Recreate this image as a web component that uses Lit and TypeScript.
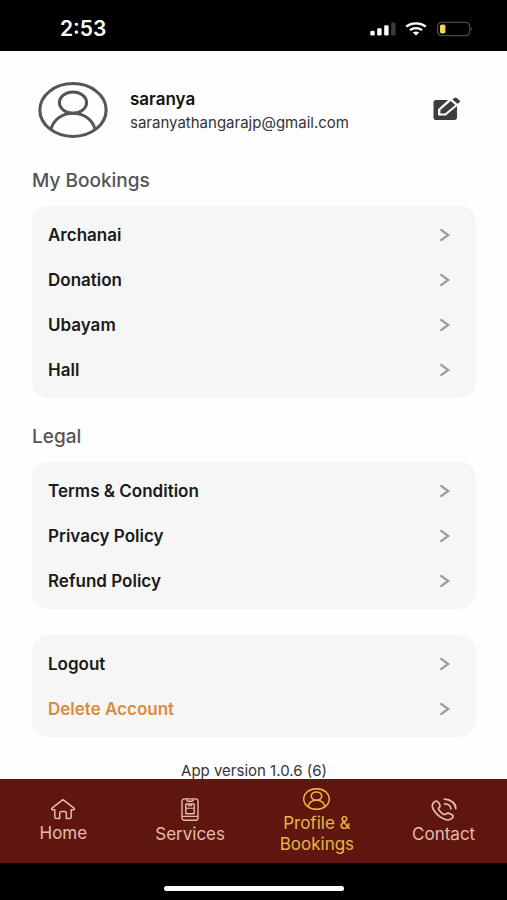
import { LitElement, html, svg, css, nothing } from "lit";
import { customElement, property } from "lit/decorators.js";
import { classMap } from "lit/directives/class-map.js";

interface MenuEntry {
  label: string;
  accent?: boolean;
}

const bookings: MenuEntry[] = [
  { label: "Archanai" },
  { label: "Donation" },
  { label: "Ubayam" },
  { label: "Hall" },
];

const legal: MenuEntry[] = [
  { label: "Terms & Condition" },
  { label: "Privacy Policy" },
  { label: "Refund Policy" },
];

const account: MenuEntry[] = [
  { label: "Logout" },
  { label: "Delete Account", accent: true },
];

const personShape = svg`
  <ellipse cx="34" cy="28" rx="32.2" ry="26.4"></ellipse>
  <ellipse cx="34" cy="20.6" rx="13.2" ry="10.6"></ellipse>
  <path d="M12.5 47.5C15 37.5 23.5 31.2 34 31.2S53 37.5 55.5 47.5"></path>`;

const homeIcon = html`<svg width="26" height="22" viewBox="0 0 26 22" fill="none" stroke="currentColor" stroke-width="1.5" stroke-linejoin="round" aria-hidden="true">
  <path d="M13 1.6 2 10.2Q1 11.4 2.6 11.8H4.8V19Q4.8 20.6 6.4 20.6H9.7V15.2Q9.7 13.6 11.3 13.6H14.7Q16.3 13.6 16.3 15.2V20.6H19.6Q21.2 20.6 21.2 19V11.8H23.4Q25 11.4 24 10.2Z"></path>
</svg>`;

const servicesIcon = html`<svg width="18" height="23" viewBox="0 0 18 23" fill="none" stroke="currentColor" stroke-width="1.4" stroke-linejoin="round" aria-hidden="true">
  <rect x="1" y="0.9" width="16" height="21.3" rx="2.2"></rect>
  <path d="M5.6 1V1.8Q5.6 3.2 7 3.2H11Q12.4 3.2 12.4 1.8V1M1.2 18.4H16.8"></path>
  <rect x="4.8" y="6" width="8.4" height="9.8" rx="0.6"></rect>
  <path d="M4.8 10.2H13.2M7.6 6V7.8H10.4V6" stroke-width="1.1"></path>
</svg>`;

const profileIcon = html`<svg width="27" height="22" viewBox="0 0 68 56" preserveAspectRatio="none" fill="none" stroke="currentColor" stroke-width="4" aria-hidden="true">${personShape}</svg>`;

const contactIcon = html`<svg width="26" height="23" viewBox="0 0 26 23" fill="none" stroke="currentColor" stroke-width="1.7" stroke-linecap="round" stroke-linejoin="round" aria-hidden="true">
  <path d="M7.9 9.9C9 9 9.4 8 8.8 6.8L7.4 4.4C6.6 3.1 5.1 2.8 3.7 3.7C1.2 5.2.6 8.4 2.3 11.2C4.8 15.5 8.7 19.3 13.8 21.3C16.8 22.5 20.2 21.8 21.7 19.6C22.4 18.5 22.1 17.5 21 16.8L18.4 15.4C17 14.8 16 15 15.1 15.8C14.2 16.6 13.2 16.7 12.1 16C10.5 15 9.1 13.6 8 12.1C7.3 11.2 7.2 10.5 7.9 9.9Z"></path>
  <path d="M13.5 1.2C19.8 1.2 24.8 5.5 24.8 10.6M13.5 5.8C17.2 5.8 19.8 8 19.8 10.8"></path>
</svg>`;

@customElement("menu-card")
class MenuCard extends LitElement {
  @property({ attribute: false }) entries: MenuEntry[] = [];

  static styles = css`
    :host {
      display: block;
      background: #f6f6f6;
      border-radius: 16px;
      padding: 6px 0;
    }
    .list {
      list-style: none;
      margin: 0;
      padding: 0;
    }
    .row {
      display: flex;
      align-items: center;
      justify-content: space-between;
      width: 100%;
      height: 45px;
      padding: 0 25px 0 16px;
      border: 0;
      background: none;
      color: #1a1a1a;
      font: 600 17px/20px Inter, Roboto, sans-serif;
      text-align: left;
      box-sizing: border-box;
      cursor: pointer;
    }
    .accent {
      color: #dd8a3c;
    }
    .chevron {
      flex: none;
      color: #9b9b9b;
    }
  `;

  render() {
    return html`<ul class="list">
      ${this.entries.map(
        (e) => html`<li>
          <button type="button" class=${classMap({ row: true, accent: !!e.accent })}>
            <span>${e.label}</span>
            <svg class="chevron" width="14" height="14" viewBox="0 0 14 14" fill="none" stroke="currentColor" stroke-width="2.2" aria-hidden="true">
              <path d="M3.4 1.4 11.2 7 3.4 12.6"></path>
            </svg>
          </button>
        </li>`
      )}
    </ul>`;
  }
}

@customElement("app-root")
class AppRoot extends LitElement {
  static styles = css`
    :host {
      display: flex;
      flex-direction: column;
      height: 100vh;
      background: #fefefe;
      font-family: Inter, Roboto, sans-serif;
      color: #1a1a1a;
    }
    .status {
      flex: none;
      display: flex;
      align-items: center;
      justify-content: space-between;
      height: 51px;
      padding: 6px 34px 0 60px;
      box-sizing: border-box;
      background: #000;
      color: #fff;
    }
    .time {
      font-size: 21px;
      line-height: 24px;
      font-weight: 600;
    }
    .signals {
      display: flex;
      align-items: center;
      gap: 9px;
    }
    .content {
      flex: 1;
      min-height: 0;
      overflow: hidden;
      padding: 0 31px 0 32px;
    }
    .profile {
      display: flex;
      align-items: center;
      padding: 31px 15px 0 6px;
    }
    .avatar {
      flex: none;
      color: #555;
    }
    .identity {
      flex: 1;
      min-width: 0;
      padding: 2px 0 0 22px;
    }
    .name {
      margin: 0;
      font-size: 17px;
      line-height: 24px;
      font-weight: 600;
      color: #111;
    }
    .email {
      margin: 0;
      font-size: 15px;
      line-height: 24px;
      color: #333;
    }
    .edit {
      display: block;
      padding: 0 0 2px;
      border: 0;
      background: none;
      color: #3d3d42;
      cursor: pointer;
    }
    .edit svg {
      display: block;
    }
    .heading {
      margin: 0;
      padding: 27px 0 13px;
      font-size: 19px;
      line-height: 24px;
      font-weight: 500;
      color: #555;
    }
    .first {
      padding-top: 31px;
    }
    .account {
      margin-top: 26px;
    }
    .version {
      margin: 0;
      padding-top: 24px;
      font-size: 15px;
      line-height: 20px;
      text-align: center;
      color: #333;
    }
    .tabs {
      flex: none;
      display: grid;
      grid-template-columns: repeat(4, 1fr);
      height: 84px;
      background: #5e160e;
    }
    .tab {
      display: flex;
      flex-direction: column;
      align-items: center;
      justify-content: center;
      gap: 3px;
      padding: 0 16px;
      color: #e3bdb0;
      font-size: 17px;
      line-height: 21px;
      text-align: center;
      text-decoration: none;
    }
    .active {
      color: #eab54a;
    }
    .gesture {
      flex: none;
      display: flex;
      align-items: center;
      justify-content: center;
      height: 37px;
      padding-top: 13px;
      box-sizing: border-box;
      background: #000;
    }
    .handle {
      width: 180px;
      height: 5px;
      border-radius: 3px;
      background: #fff;
    }
  `;

  private tab(label: string, icon: unknown, active = false) {
    return html`<a
      href="#"
      class=${classMap({ tab: true, active })}
      aria-current=${active ? "page" : nothing}
      >${icon}<span>${label}</span></a
    >`;
  }

  render() {
    return html`
      <header class="status">
        <span class="time">2:53</span>
        <div class="signals">
          <svg width="26" height="14" viewBox="0 0 26 14" fill="#fff" aria-hidden="true">
            <rect x="0.3" y="8.8" width="4.4" height="4.7" rx="1.3"></rect>
            <rect x="7.2" y="6.2" width="4.4" height="7.3" rx="1.3"></rect>
            <rect x="14.2" y="3.3" width="4.4" height="10.2" rx="1.3"></rect>
            <rect x="21.2" y="0.5" width="4.4" height="13" rx="1.3" fill="#3b3b3b"></rect>
          </svg>
          <svg width="22" height="14" viewBox="0 0 22 14" fill="none" stroke="#fff" stroke-width="2.3" aria-hidden="true">
            <path d="M1.2 4.5C6.7.2 15.3.2 20.8 4.5M5 8.2C8.4 5.5 13.6 5.5 17 8.2"></path>
            <path d="M7.8 10.6Q11 8.6 14.2 10.6L11 13.6Z" fill="#fff" stroke="none"></path>
          </svg>
          <svg width="37" height="16" viewBox="0 0 37 16" fill="none" aria-hidden="true">
            <rect x="1.7" y="1.4" width="32" height="13.2" rx="4" stroke="#4a4a48" stroke-width="1.3"></rect>
            <rect x="4" y="3.4" width="5.4" height="9.2" rx="1.8" fill="#f8d748"></rect>
            <path d="M35.2 5.6Q37 8 35.2 10.4Z" fill="#4a4a48"></path>
          </svg>
        </div>
      </header>

      <main class="content">
        <section class="profile">
          <svg class="avatar" width="70" height="56" viewBox="0 0 68 56" preserveAspectRatio="none" fill="none" stroke="currentColor" stroke-width="3" aria-hidden="true">${personShape}</svg>
          <div class="identity">
            <p class="name">saranya</p>
            <p class="email">saranyathangarajp@gmail.com</p>
          </div>
          <button type="button" class="edit" aria-label="Edit profile">
            <svg width="28" height="24" viewBox="0 0 28 24" aria-hidden="true">
              <path fill="currentColor" d="M3 3H15.2L5 12.2V18.5H12.8L24 9V20.2Q24 23 21 23H3Q.5 23 .5 20.2V5.8Q.5 3 3 3Z"></path>
              <path fill="currentColor" d="M7.4 13 17.8 4 22.3 7.9 12 16.6H7.4Z"></path>
              <path fill="currentColor" d="M19.5 2.6 21.4 1Q22.6.2 23.8 1.1L26.6 3.4Q27.6 4.4 26.5 5.4L24.3 6.8Z"></path>
            </svg>
          </button>
        </section>

        <h2 class="heading first">My Bookings</h2>
        <menu-card .entries=${bookings}></menu-card>

        <h2 class="heading">Legal</h2>
        <menu-card .entries=${legal}></menu-card>

        <menu-card class="account" .entries=${account}></menu-card>

        <p class="version">App version 1.0.6 (6)</p>
      </main>

      <nav class="tabs">
        ${this.tab("Home", homeIcon)} ${this.tab("Services", servicesIcon)}
        ${this.tab("Profile & Bookings", profileIcon, true)}
        ${this.tab("Contact", contactIcon)}
      </nav>
      <footer class="gesture"><div class="handle"></div></footer>
    `;
  }
}
